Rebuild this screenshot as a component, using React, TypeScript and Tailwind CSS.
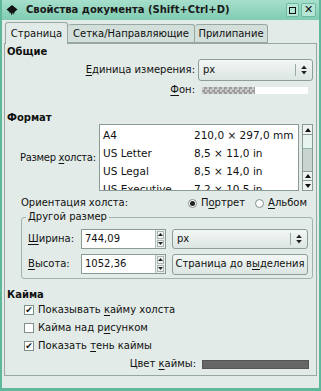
import React from "react";

const U = ({ children }: { children: React.ReactNode }) => (
  <span className="underline underline-offset-[2px]">{children}</span>
);

function UpDown() {
  return (
    <svg width="6" height="10" viewBox="0 0 6 10">
      <path d="M3 0.5 L5.8 4 L0.2 4 Z" fill="#222" />
      <path d="M3 9.5 L5.8 6 L0.2 6 Z" fill="#222" />
    </svg>
  );
}

function Combo({ value, className }: { value: string; className: string }) {
  return (
    <div
      className={`flex items-center rounded-[3px] border border-[#8d9d97] bg-gradient-to-b from-[#f3f7f5] to-[#dbe5e1] ${className}`}
    >
      <span className="flex-1 pl-[4px]">{value}</span>
      <span className="h-[12px] w-px bg-[#9aa9a3]" />
      <span className="flex w-[16px] justify-center">
        <UpDown />
      </span>
    </div>
  );
}

function Spin({ value }: { value: string }) {
  return (
    <div className="flex h-[20px] w-[85px] items-stretch border border-[#8a9a94] bg-white">
      <span className="flex flex-1 items-center pl-[3px]">{value}</span>
      <span className="flex w-[10px] flex-col gap-px border-l border-[#b3beb9] bg-[#e8eeeb] p-px">
        <span className="flex flex-1 items-center justify-center border border-[#a9b6b1] bg-[#f2f5f4]">
          <svg width="5" height="3" viewBox="0 0 5 3">
            <path d="M2.5 0 L5 3 L0 3 Z" fill="#222" />
          </svg>
        </span>
        <span className="flex flex-1 items-center justify-center border border-[#a9b6b1] bg-[#f2f5f4]">
          <svg width="5" height="3" viewBox="0 0 5 3">
            <path d="M2.5 3 L5 0 L0 0 Z" fill="#222" />
          </svg>
        </span>
      </span>
    </div>
  );
}

function Check({ on, children }: { on: boolean; children: React.ReactNode }) {
  return (
    <div className="flex h-[18px] items-center pl-[19px]">
      <span className="flex h-[10px] w-[10px] items-center justify-center border border-[#7f8f89] bg-white text-[9px] leading-none">
        {on ? "✔" : ""}
      </span>
      <span className="ml-[4px]">{children}</span>
    </div>
  );
}

function Radio({ on, children }: { on: boolean; children: React.ReactNode }) {
  return (
    <div className="flex items-center">
      <span className="flex h-[9px] w-[9px] items-center justify-center rounded-full border border-[#7f8f89] bg-white">
        {on && <span className="h-[5px] w-[5px] rounded-full bg-[#222]" />}
      </span>
      <span className="ml-[4px]">{children}</span>
    </div>
  );
}

const sizes = [
  ["A4", "210,0 × 297,0 mm"],
  ["US Letter", "8,5 × 11,0 in"],
  ["US Legal", "8,5 × 14,0 in"],
  ["US Executive", "7,2 × 10,5 in"],
];

export default function App() {
  return (
    <div className="flex h-[391px] w-[321px] flex-col bg-[#5fb89c] px-[2px] pb-[3px] font-['DejaVu_Sans',sans-serif] text-[10px] leading-[12px] text-[#111]">
      {/* title bar */}
      <div className="flex h-[20px] items-center bg-gradient-to-b from-[#a6dfcc] to-[#80ccb3]">
        <svg width="12" height="11" viewBox="0 0 12 11" className="ml-[4px]">
          <path d="M6 0 L11.5 4.5 L8.5 7 L8 10 L7 7.5 L5.5 10.5 L4.8 7.5 L3.5 8.5 L3.5 7 L0.5 4.5 Z" fill="#111" />
        </svg>
        <span className="ml-[8px] font-bold text-[#1a1a1a]">Свойства документа (Shift+Ctrl+D)</span>
        <div className="ml-auto mr-[3px] flex gap-[2px]">
          <span className="flex h-[14px] w-[13px] items-center justify-center rounded-[2px] border border-[#6fb9a2] bg-[#b6e6d6]">
            <span className="h-[7px] w-[7px] border-[1.5px] border-[#111]" />
          </span>
          <span className="flex h-[14px] w-[15px] items-center justify-center rounded-[2px] border border-[#6fb9a2] bg-[#b6e6d6] text-[11px] font-bold">
            ✕
          </span>
        </div>
      </div>

      <div className="flex flex-1 flex-col bg-[#e2ebe7] px-[2px] pt-[2px]">
        {/* tabs */}
        <div className="relative z-10 flex h-[21px] items-end pl-px">
          <div className="-mb-px flex h-[22px] w-[63px] items-center justify-center rounded-t-[3px] border border-b-0 border-[#97a8a2] bg-[#e2ebe7]">
            Страница
          </div>
          <div className="flex h-[19px] w-[127px] items-center justify-center rounded-t-[3px] border border-l-0 border-[#97a8a2] bg-[#d3dfda]">
            Сетка/Направляющие
          </div>
          <div className="flex h-[19px] w-[73px] items-center justify-center rounded-t-[3px] border border-l-0 border-[#97a8a2] bg-[#d3dfda]">
            Прилипание
          </div>
        </div>

        {/* panel */}
        <div className="flex h-[333px] flex-col border border-[#97a8a2]">
          <div className="mt-[2px] h-[12px] pl-[2px] font-bold">Общие</div>

          <div className="mt-[1px] flex h-[22px] items-center justify-end pr-[3px]">
            <span>
              <U>Е</U>диница измерения:
            </span>
            <Combo value="px" className="ml-[3px] h-[22px] w-[115px]" />
          </div>

          <div className="mt-[3px] flex h-[12px] items-center justify-end pr-[8px]">
            <span>
              <U>Ф</U>он:
            </span>
            <span className="ml-[7px] flex h-[7px] w-[106px]">
              <span className="h-full w-[53px] bg-[repeating-conic-gradient(#9d9d9d_0_25%,#cbcbcb_0_50%)] bg-[length:5px_5px]" />
              <span className="h-full flex-1 bg-white" />
            </span>
          </div>

          <div className="mt-[16px] h-[12px] pl-[2px] font-bold">Формат</div>

          <div className="flex h-[67px] items-center pl-[15px]">
            <span className="w-[79px] shrink-0 whitespace-nowrap tracking-[-0.3px]">
              Размер <U>х</U>олста:
            </span>
            <div className="h-full w-[200px] shrink-0 overflow-hidden border border-[#8a9a94] bg-white pt-[1px] text-[10.5px]">
              {sizes.map(([n, s]) => (
                <div key={n} className="flex h-[18px] items-center whitespace-nowrap pl-[3px]">
                  <span className="w-[91px]">{n}</span>
                  <span>{s}</span>
                </div>
              ))}
            </div>
            <div className="ml-[3px] flex h-full w-[11px] shrink-0 flex-col border border-[#8a9a94] bg-[#c9d3cf]">
              <span className="flex h-[10px] items-center justify-center border-b border-[#8a9a94] bg-[#eef2f0]">
                <svg width="6" height="4" viewBox="0 0 6 4"><path d="M3 0 L6 4 L0 4 Z" fill="#111" /></svg>
              </span>
              <span className="h-[14px] border-b border-[#8fb9a9] bg-[#e6f3ee]" />
              <span className="flex-1" />
              <span className="flex h-[10px] items-center justify-center border-y border-[#8a9a94] bg-[#eef2f0]">
                <svg width="6" height="4" viewBox="0 0 6 4"><path d="M3 0 L6 4 L0 4 Z" fill="#111" /></svg>
              </span>
              <span className="flex h-[9px] items-center justify-center bg-[#eef2f0]">
                <svg width="6" height="4" viewBox="0 0 6 4"><path d="M3 4 L6 0 L0 0 Z" fill="#111" /></svg>
              </span>
            </div>
          </div>

          <div className="mt-[6px] flex h-[12px] items-center pl-[16px] pr-[9px]">
            <span>Ориентация холста:</span>
            <div className="ml-auto flex items-center gap-[10px]">
              <Radio on>
                П<U>о</U>ртрет
              </Radio>
              <Radio on={false}>
                <U>А</U>льбом
              </Radio>
            </div>
          </div>

          {/* frame */}
          <div className="relative ml-[16px] mr-[3px] mt-[8px] flex h-[62px] flex-col gap-[5px] rounded-[3px] border border-[#a3b2ac] pl-[6px] pr-[4px] pt-[11px]">
            <span className="absolute -top-[7px] left-[4px] bg-[#e2ebe7] px-[2px]">Другой размер</span>
            <div className="flex h-[20px] items-center">
              <span className="w-[53px]">
                <U>Ш</U>ирина:
              </span>
              <Spin value="744,09" />
              <Combo value="px" className="ml-[6px] h-[20px] flex-1" />
            </div>
            <div className="flex h-[20px] items-center">
              <span className="w-[53px]">
                <U>В</U>ысота:
              </span>
              <Spin value="1052,36" />
              <div className="ml-[6px] flex h-[21px] flex-1 items-center justify-center rounded-[3px] border border-[#8d9d97] bg-gradient-to-b from-[#f3f7f5] to-[#dbe5e1]">
                Страница до в<U>ы</U>деления
              </div>
            </div>
          </div>

          <div className="mt-[10px] h-[12px] pl-[2px] font-bold">Кайма</div>
          <Check on>
            Показывать <U>к</U>айму холста
          </Check>
          <Check on={false}>
            Кайма над р<U>и</U>сунком
          </Check>
          <Check on>
            Показать <U>т</U>ень каймы
          </Check>

          <div className="flex h-[18px] items-center justify-end pr-[7px]">
            <span>
              Цвет <U>к</U>аймы:
            </span>
            <span className="ml-[6px] h-[9px] w-[107px] border border-[#555] bg-[#666]" />
          </div>
        </div>
      </div>
    </div>
  );
}
